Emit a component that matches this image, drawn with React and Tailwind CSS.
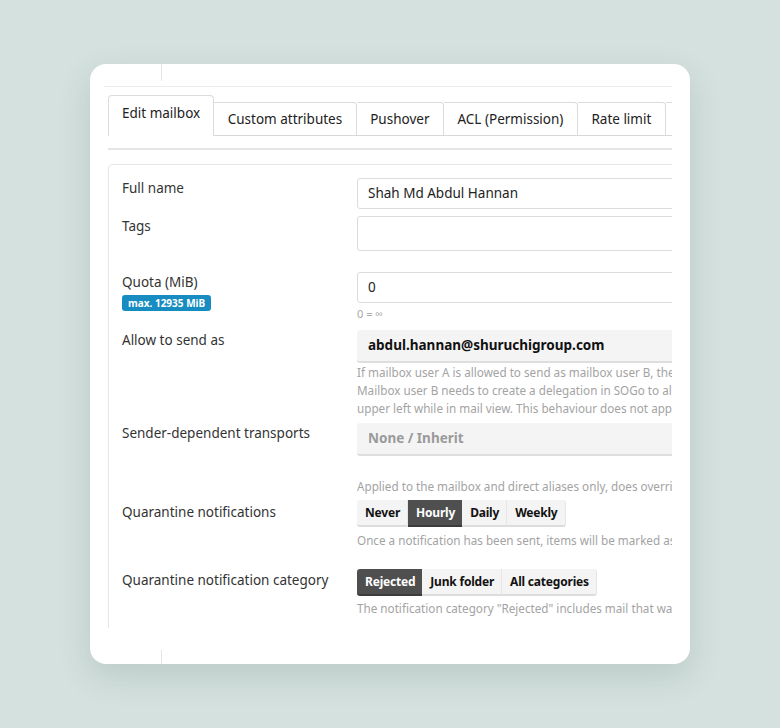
import React from "react";

const tabs = [
  "Edit mailbox",
  "Custom attributes",
  "Pushover",
  "ACL (Permission)",
  "Rate limit",
  "Two-factor",
];

function Label({ children, extra }) {
  return (
    <div className="w-[235px] shrink-0 flex flex-col items-start text-[13.5px] leading-[20px] text-[#333]">
      <span>{children}</span>
      {extra}
    </div>
  );
}

function Help({ children, className = "" }) {
  return (
    <p className={"text-[11.7px] leading-[18px] text-[#a3a3a3] whitespace-nowrap " + className}>
      {children}
    </p>
  );
}

function BtnGroup({ items, active }) {
  return (
    <div className="flex">
      {items.map((it, i) => (
        <div
          key={it}
          className={
            "h-[27px] pl-[8px] pr-[7px] flex items-center text-[12px] tracking-[-0.2px] font-bold border-b-2 " +
            (i === 0 ? "rounded-l-[3px] " : "") +
            (i === items.length - 1 ? "rounded-r-[3px] " : "") +
            (it === active
              ? "bg-[#4f4f4f] text-white border-[#3c3c3c]"
              : "bg-[#f4f4f4] text-[#111] border-[#dcdcdc] border-r border-r-[#e6e6e6]")
          }
        >
          {it}
        </div>
      ))}
    </div>
  );
}

export default function App() {
  return (
    <div
      className="w-full h-[728px] bg-[#d4e1de] pt-16 flex justify-center"
      style={{ fontFamily: '"Noto Sans", "Open Sans", sans-serif' }}
    >
      <div className="w-[600px] h-[600px] bg-white rounded-[16px] shadow-[0_12px_32px_rgba(60,90,85,0.16)] flex flex-col">
        {/* clipped screenshot region */}
        <div className="ml-[14px] w-[568px] h-[564px] overflow-hidden">
          <div className="w-[700px]">
            <div className="h-[17px] ml-[57px] border-l border-[#e4e4e4]" />
            <div className="h-[6px] border-b border-[#ececec]" />

            {/* tabs */}
            <div className="flex items-end mt-[8px] ml-[4px]">
              {tabs.map((t, i) =>
                i === 0 ? (
                  <div
                    key={t}
                    className="h-[41px] px-[13px] pt-[7px] text-[13.5px] text-[#222] bg-white border border-b-0 border-[#dcdcdc] rounded-t-[4px]"
                  >
                    {t}
                  </div>
                ) : (
                  <div
                    key={t}
                    className="h-[34px] px-[13.5px] pt-[6px] text-[13.5px] text-[#222] border border-l-0 border-[#dcdcdc] border-b-[#d8d8d8] rounded-tr-[4px]"
                  >
                    {t}
                  </div>
                )
              )}
            </div>
            <div className="mt-[12px] ml-[4px] h-[2px] bg-[#e6e6e6]" />

            {/* panel */}
            <div className="mt-[14px] ml-[4px] border border-[#e6e6e6] rounded-t-[4px] pl-[13px] pt-[13px] pb-[20px]">
              <div className="flex">
                <Label>Full name</Label>
                <div className="flex-1 h-[31px] border border-[#dcdcdc] rounded-[3px] px-[10px] flex items-center text-[13.5px] text-[#222]">
                  Shah Md Abdul Hannan
                </div>
              </div>

              <div className="flex mt-[7px]">
                <Label>Tags</Label>
                <div className="flex-1 h-[35px] border border-[#dcdcdc] rounded-[3px]" />
              </div>

              <div className="flex mt-[21px]">
                <Label
                  extra={
                    <div className="mt-[3px] flex h-[16px] items-center px-[6px] rounded-[3px] bg-[#178cc1] text-white text-[10px] font-bold">
                      max. 12935 MiB
                    </div>
                  }
                >
                  Quota (MiB)
                </Label>
                <div className="flex-1">
                  <div className="h-[31px] border border-[#dcdcdc] rounded-[3px] px-[10px] flex items-center text-[13.5px] text-[#222]">
                    0
                  </div>
                  <p className="mt-[2px] text-[11px] leading-[18px] text-[#a8a8a8]">0 = ∞</p>
                </div>
              </div>

              <div className="flex mt-[7px]">
                <Label>Allow to send as</Label>
                <div className="flex-1">
                  <div className="h-[33px] bg-[#f4f4f4] border-b-2 border-[#dedede] rounded-[3px] px-[11px] flex items-center text-[13.5px] font-bold text-[#111]">
                    abdul.hannan@shuruchigroup.com
                  </div>
                  <Help>If mailbox user A is allowed to send as mailbox user B, the sender address is not automatically displayed</Help>
                  <Help>Mailbox user B needs to create a delegation in SOGo to allow mailbox user A to select their address as sender.</Help>
                  <Help>upper left while in mail view. This behaviour does not apply to alias addresses.</Help>
                </div>
              </div>

              <div className="flex mt-[6px]">
                <Label>Sender-dependent transports</Label>
                <div className="flex-1">
                  <div className="h-[33px] bg-[#f4f4f4] border-b-2 border-[#dedede] rounded-[3px] px-[11px] flex items-center text-[13.5px] font-bold text-[#9a9a9a]">
                    None / Inherit
                  </div>
                  <Help className="mt-[21px]">Applied to the mailbox and direct aliases only, does override domain-wide settings.</Help>
                </div>
              </div>

              <div className="flex mt-[5px]">
                <div className="pt-[2px]">
                  <Label>Quarantine notifications</Label>
                </div>
                <div className="flex-1">
                  <BtnGroup items={["Never", "Hourly", "Daily", "Weekly"]} active="Hourly" />
                  <Help className="mt-[4px]">Once a notification has been sent, items will be marked as "notified" and no further notifications</Help>
                </div>
              </div>

              <div className="flex mt-[20px]">
                <div className="pt-[1px]">
                  <Label>Quarantine notification category</Label>
                </div>
                <div className="flex-1">
                  <BtnGroup items={["Rejected", "Junk folder", "All categories"]} active="Rejected" />
                  <Help className="mt-[3px]">The notification category "Rejected" includes mail that was rejected, while "Junk folder" will</Help>
                </div>
              </div>
            </div>
          </div>
        </div>
        <div className="mt-[22px] ml-[71px] h-[14px] border-l border-[#e4e4e4]" />
      </div>
    </div>
  );
}
